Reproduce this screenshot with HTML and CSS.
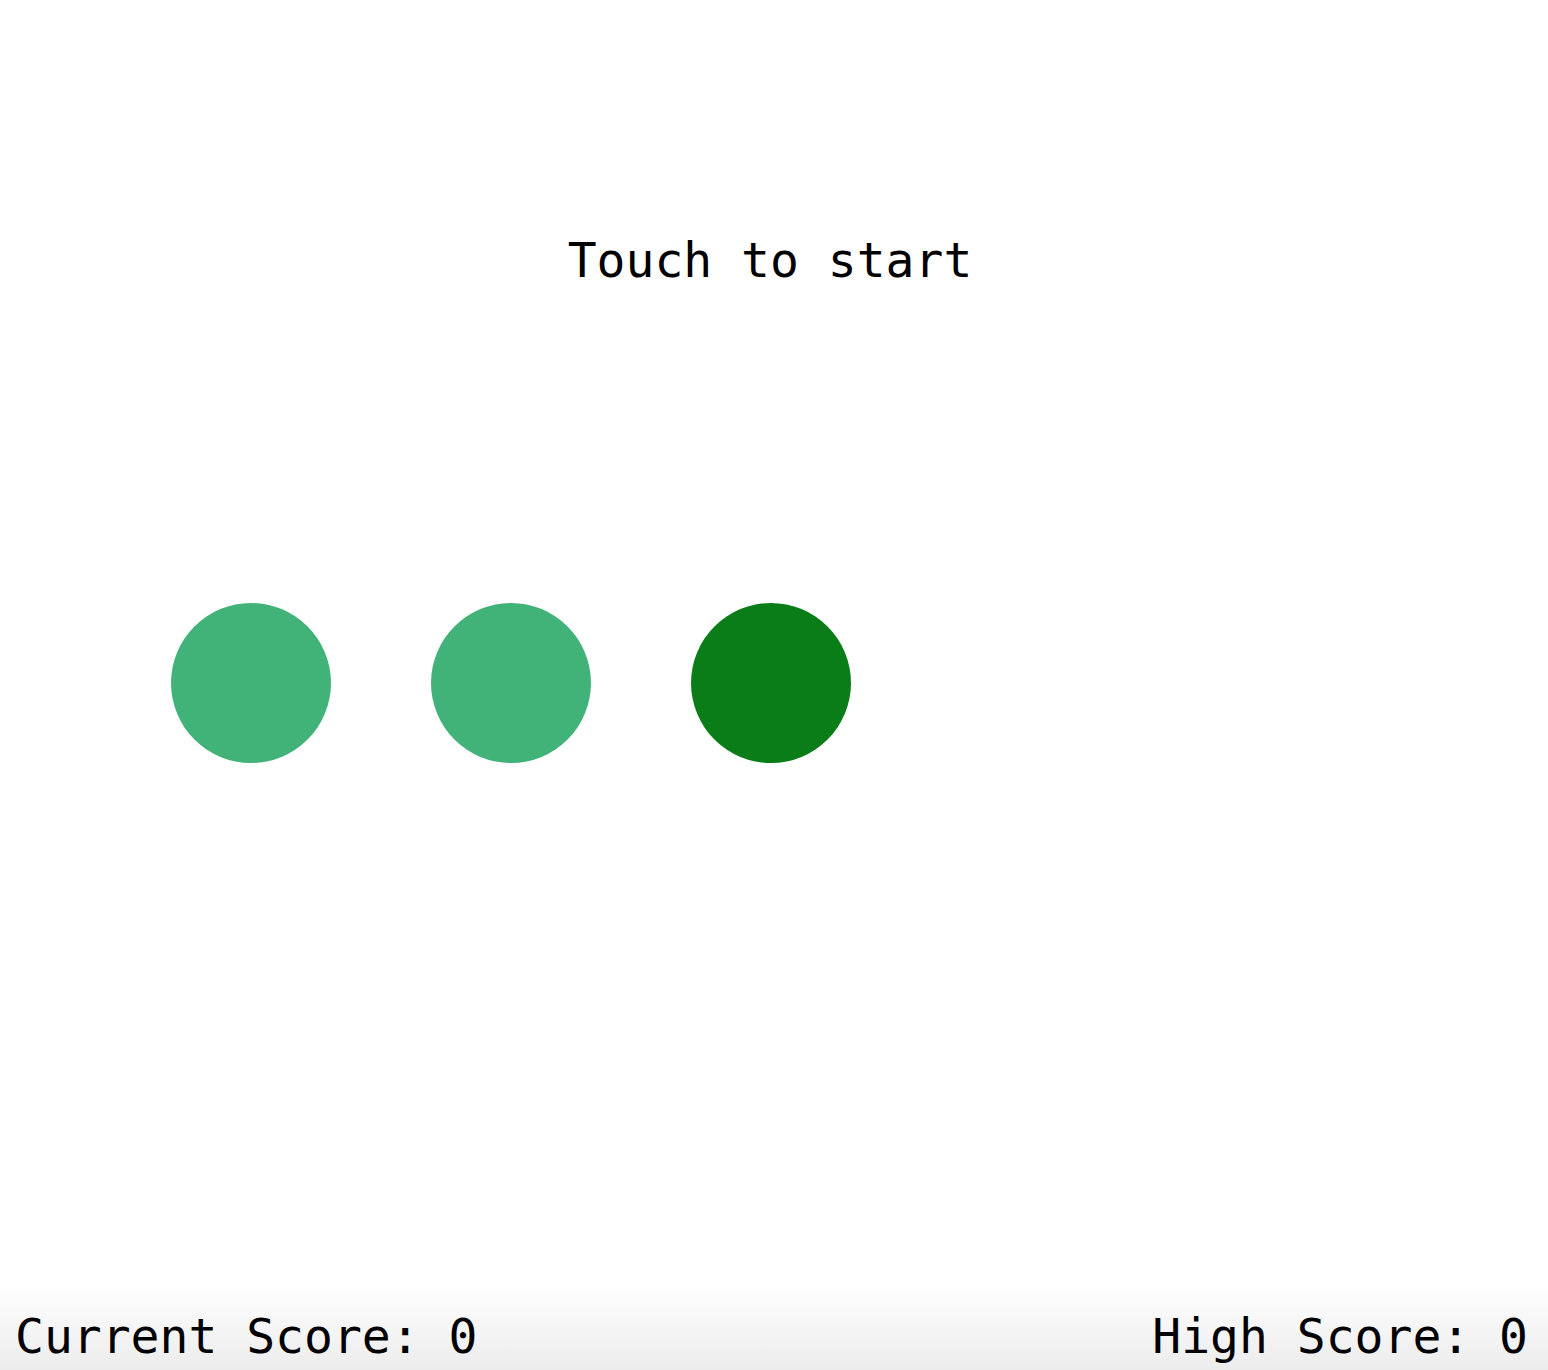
FILE: index.html
```html
<!DOCTYPE html>
<html>
<head>
<meta charset="utf-8">
<link rel="stylesheet" href="styles.css">
</head>
<body>
<div class="page">
  <div class="game">
    <div class="message">Touch to start</div>
    <div class="dots">
      <div class="dot light"></div>
      <div class="dot light"></div>
      <div class="dot dark"></div>
    </div>
  </div>
  <div class="footer">
    <span class="score">Current Score: 0</span>
    <span class="score">High Score: 0</span>
  </div>
</div>
</body>
</html>
```
FILE: styles.css
```css
html, body {
  margin: 0;
  padding: 0;
  background: #fff;
}
body {
  font-family: "DejaVu Sans Mono", "Liberation Mono", monospace;
  color: #000;
}
.page {
  height: 1370px;
  display: flex;
  flex-direction: column;
}
.game {
  width: 1540px;
  flex: 1;
  display: flex;
  flex-direction: column;
}
.message {
  text-align: center;
  font-size: 48px;
  line-height: 56px;
  margin-top: 232px;
}
.dots {
  display: flex;
  gap: 100px;
  padding-left: 171px;
  margin-top: 315px;
}
.dot {
  width: 160px;
  height: 160px;
  border-radius: 50%;
}
.light { background: #41b378; }
.dark { background: #0a7d18; }
.footer {
  height: 80px;
  display: flex;
  justify-content: space-between;
  align-items: flex-end;
  padding: 0 20px 6px 15px;
  background: linear-gradient(#ffffff, #ececec);
  font-size: 48px;
  line-height: 56px;
}
```
